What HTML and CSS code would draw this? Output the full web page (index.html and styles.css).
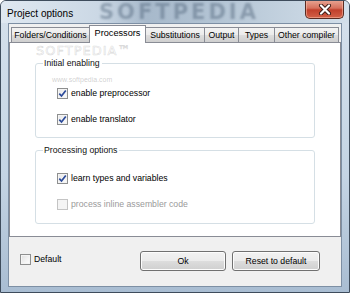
FILE: index.html
```html
<!DOCTYPE html>
<html lang="en">
<head>
    <meta charset="UTF-8">
    <title>Project options</title>
    <link rel="stylesheet" href="styles.css">
</head>
<body>
    <div class="window">
        <!-- title bar -->
        <div class="titlebar">
            <span class="title">Project options</span>
            <button class="close">
                <svg width="14" height="11" viewBox="0 0 14 11">
                    <path d="M3 1.5 L11 9.5 M11 1.5 L3 9.5" stroke="#3a1a14" stroke-width="4" stroke-linecap="round"/>
                    <path d="M3 1.5 L11 9.5 M11 1.5 L3 9.5" stroke="#fff" stroke-width="2.2" stroke-linecap="round"/>
                </svg>
            </button>
            <span class="wm-title">SOFTPEDIA</span>
        </div>

        <div class="client">
            <!-- tabs -->
            <div class="tabs">
                <div class="tab t-folders">Folders/Conditions</div>
                <div class="tab t-proc active">Processors</div>
                <div class="tab t-subst">Substitutions</div>
                <div class="tab t-output">Output</div>
                <div class="tab t-types">Types</div>
                <div class="tab t-other">Other compiler</div>
            </div>

            <div class="panel">
                <span class="wm-big">SOFTPEDIA™</span>
                <span class="wm-url">www.softpedia.com</span>

                <div class="group g-initial">
                    <div class="group-title">Initial enabling</div>
                    <label class="check first">
                        <span class="box checked"><svg width="9" height="9" viewBox="0 0 9 9"><path d="M1.3 4.6 L3.5 7 L7.8 1.4" fill="none" stroke="#2b4a9a" stroke-width="1.7"/></svg></span>
                        enable preprocessor
                    </label>
                    <label class="check">
                        <span class="box checked"><svg width="9" height="9" viewBox="0 0 9 9"><path d="M1.3 4.6 L3.5 7 L7.8 1.4" fill="none" stroke="#2b4a9a" stroke-width="1.7"/></svg></span>
                        enable translator
                    </label>
                </div>

                <div class="group g-processing">
                    <div class="group-title">Processing options</div>
                    <label class="check first">
                        <span class="box checked"><svg width="9" height="9" viewBox="0 0 9 9"><path d="M1.3 4.6 L3.5 7 L7.8 1.4" fill="none" stroke="#2b4a9a" stroke-width="1.7"/></svg></span>
                        learn types and variables
                    </label>
                    <label class="check disabled">
                        <span class="box"></span>
                        process inline assembler code
                    </label>
                </div>
            </div>

            <!-- bottom buttons -->
            <div class="footer-bar">
                <label class="check default">
                    <span class="box"></span>
                    Default
                </label>
                <button class="btn btn-ok">Ok</button>
                <button class="btn btn-reset">Reset to default</button>
            </div>
        </div>
    </div>
</body>
</html>
```

FILE: styles.css
```css
/* base */
html, body {
    margin: 0;
    padding: 0;
    background: #fff;
}
.window {
    box-sizing: border-box;
    width: 350px;
    height: 293px;
    border: 1px solid #3e4c5c;
    border-radius: 6px 6px 0 0;
    background: linear-gradient(to bottom, #d6e1ec 0%, #c4d4e4 60%, #a9bdd2 100%);
    display: flex;
    flex-direction: column;
    font-family: "Liberation Sans", Arial, sans-serif;
    font-size: 8.7px;
    color: #000;
    position: relative;
    overflow: hidden;
}

/* title bar */
.titlebar {
    height: 22px;
    display: flex;
    align-items: flex-start;
    position: relative;
    background: linear-gradient(to right, #dfe8f1 0%, #cbd8e5 28%, #a7b9cb 42%, #b3c4d4 62%, #d3dfea 100%);
}
.title {
    font-size: 10px;
    line-height: 12px;
    padding: 7px 0 0 6px;
    color: #000;
    position: relative;
    z-index: 1;
}
.close {
    margin-left: auto;
    margin-right: 5px;
    margin-top: -1px;
    width: 39px;
    height: 19px;
    padding: 0;
    border: 1px solid #5a2b22;
    border-top: none;
    border-radius: 0 0 5px 5px;
    background: linear-gradient(to bottom, #e9a795 0%, #d6715d 45%, #c1402c 55%, #d26047 100%);
    box-shadow: inset 0 0 0 1px rgba(255, 200, 180, 0.5);
    display: flex;
    align-items: center;
    justify-content: center;
    position: relative;
    z-index: 1;
}
.wm-title {
    position: absolute;
    left: 98px;
    top: 0;
    font-family: "DejaVu Sans", sans-serif;
    font-weight: bold;
    font-size: 21px;
    line-height: 22px;
    letter-spacing: 3px;
    color: rgba(80, 100, 122, 0.45);
    filter: blur(1.1px);
    pointer-events: none;
}

/* client area */
.client {
    flex: 1;
    margin: 0 7px 5px 7px;
    border: 1px solid #7d8fa4;
    background: #f0f0f0;
    display: flex;
    flex-direction: column;
}
.tabs {
    height: 18px;
    display: flex;
    align-items: flex-end;
    padding-left: 2px;
}
.tab {
    box-sizing: border-box;
    height: 15px;
    border: 1px solid #898c95;
    border-bottom: none;
    margin-right: -1px;
    background: linear-gradient(to bottom, #f3f3f3 0%, #ebebeb 50%, #dddddd 51%, #cfcfcf 100%);
    display: flex;
    align-items: center;
    justify-content: center;
    line-height: 11px;
}
.tab.active {
    height: 18px;
    margin-bottom: -1px;
    background: #fff;
    position: relative;
    z-index: 1;
    font-size: 9.2px;
    padding-bottom: 2px;
}
.t-folders { width: 79px; }
.t-proc { width: 57px; }
.t-subst { width: 60px; }
.t-output { width: 35px; }
.t-types { width: 37px; }
.t-other { width: 65px; }

.panel {
    box-sizing: border-box;
    height: 195px;
    border: 1px solid #898c95;
    background: #fff;
    position: relative;
    padding: 20px 0 0 25px;
}
.wm-big {
    position: absolute;
    left: 26px;
    top: 2px;
    font-family: "DejaVu Sans", sans-serif;
    font-size: 13px;
    line-height: 12px;
    letter-spacing: 1px;
    color: transparent;
    -webkit-text-stroke: 0.6px rgba(150, 150, 150, 0.35);
}
.wm-url {
    position: absolute;
    left: 42px;
    top: 33px;
    font-size: 7px;
    color: rgba(150, 150, 150, 0.45);
}

/* group boxes */
.group {
    box-sizing: border-box;
    width: 280px;
    border: 1px solid #d5dfe5;
    border-radius: 3px;
    padding-left: 21px;
}
.g-initial { height: 75px; }
.g-processing { height: 74px; margin-top: 12px; }
.group-title {
    width: fit-content;
    margin: -6px 0 0 -14px;
    padding: 0 2px 0 1px;
    line-height: 11px;
    background: #fff;
    color: #111;
}
.check {
    display: flex;
    align-items: center;
    height: 14px;
    gap: 3px;
}
.g-initial .check.first { margin-top: 17px; }
.g-processing .check.first { margin-top: 15px; }
.group .check + .check { margin-top: 12px; }
.box {
    box-sizing: border-box;
    width: 11px;
    height: 11px;
    border: 1px solid #8e8f8f;
    background: linear-gradient(135deg, #dedede 0%, #f4f4f4 60%, #fff 100%);
    box-shadow: inset 0 0 0 1px #f4f4f4;
    display: flex;
    align-items: center;
    justify-content: center;
}
.box.checked {
    background: linear-gradient(135deg, #e8e8e8, #fbfbfb);
}
.check.disabled { color: #9a9a9a; }
.check.disabled .box {
    border-color: #c4c4c4;
    background: #f4f4f4;
    box-shadow: none;
}

/* bottom bar */
.footer-bar {
    flex: 1;
    display: flex;
    align-items: flex-start;
    padding: 14px 21px 0 11px;
}
.check.default { margin-top: 1px; }
.btn {
    box-sizing: border-box;
    height: 20px;
    padding: 0;
    border: 1px solid #707070;
    border-radius: 3px;
    background: linear-gradient(to bottom, #f2f2f2 0%, #ebebeb 50%, #dddddd 51%, #cfcfcf 100%);
    box-shadow: inset 0 0 0 1px #fcfcfc;
    font-family: "Liberation Sans", Arial, sans-serif;
    font-size: 8.7px;
    color: #000;
}
.btn-ok {
    width: 86px;
    margin-left: auto;
}
.btn-reset {
    width: 88px;
    margin-left: 6px;
}
```
